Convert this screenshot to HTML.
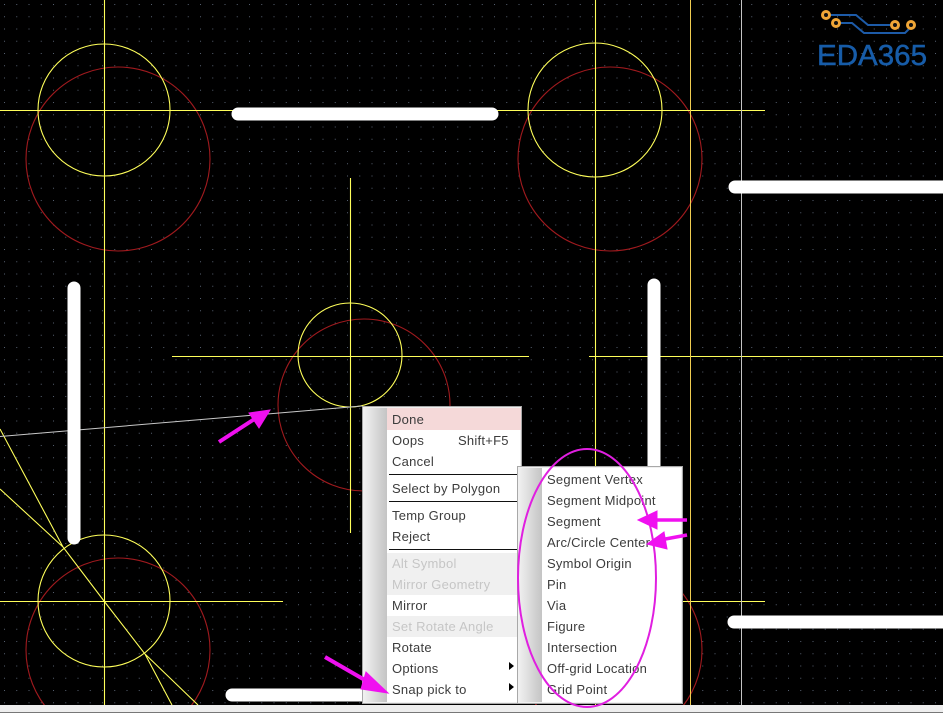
<!DOCTYPE html>
<html><head><meta charset="utf-8"><style>
html,body{margin:0;padding:0;background:#000}
#p{position:relative;width:943px;height:713px;overflow:hidden;background:#000;font-family:"Liberation Sans",sans-serif}
svg{position:absolute;left:0;top:0}
.m{position:absolute;background:#fff;border:1px solid #a8a8a8;box-sizing:border-box;box-shadow:inset 0 0 0 1px #f0f0f0}
.s{position:absolute;left:1px;top:1px;bottom:1px;width:23px;background:linear-gradient(90deg,#f0f0f0,#c4c4c4)}
.i{position:absolute;font-size:13px;letter-spacing:.25px;color:#3c3c3c;height:21px;line-height:21px;white-space:nowrap}
.d{color:#c6c6c6}
.bg{position:absolute;background:#f0f0f0}
.l{position:absolute;height:1px;background:#111}
.a{position:absolute;width:0;height:0;border-left:5px solid #000;border-top:4px solid transparent;border-bottom:4px solid transparent}
</style></head><body><div id="p">
<svg width="943" height="713" viewBox="0 0 943 713">
<defs><pattern id="g" x="4" y="4" width="12.25" height="12.25" patternUnits="userSpaceOnUse"><rect width="1" height="1" fill="#566070"/></pattern></defs>
<rect width="943" height="713" fill="#000"/>
<rect width="943" height="705" fill="url(#g)"/>
<g fill="none" stroke="#a01a1e" stroke-width="1.1">
<circle cx="118" cy="159" r="92"/><circle cx="610" cy="159" r="92"/><circle cx="364" cy="405" r="86"/><circle cx="118" cy="650" r="92"/><circle cx="610" cy="650" r="92"/>
</g>
<g fill="none" stroke="#ffff5a" stroke-width="1.1">
<circle cx="104" cy="110" r="66"/><circle cx="595" cy="110" r="67"/><circle cx="350" cy="355" r="52"/><circle cx="104" cy="601" r="66"/>
<path d="M0 110.5H765M104.5 0V705M595.500 0V705M172 356.500H529M589 356.500H943M350.500 178V533M0 601.500H283M596 601.500H765"/>
<path d="M0 429L63 547L104 601L145 654L172 705M0 489L63 547M145 654L198 705"/>
</g>
<path d="M690.500 0V705" stroke="#f0cc50" fill="none"/>
<path d="M741.500 0V705" stroke="#c4c4c4" fill="none"/>
<path d="M0 436.500L362 406" stroke="#c8c8c8" fill="none"/>
<g fill="none" stroke="#fff" stroke-width="13" stroke-linecap="round">
<path d="M238 114H492M735 187H950M74 288V538M654 285V470M734 622H950M232 695H370"/>
</g>
<rect y="705" width="943" height="8" fill="#eeeeee"/><rect y="712" width="943" height="1" fill="#777"/>
<g fill="none" stroke="#1d5ba8" stroke-width="2"><path d="M830 15H856L868 25H891M840 23H852L864 33H905L911 27"/></g>
<g fill="#111" stroke="#f0a637" stroke-width="3"><circle cx="826" cy="15" r="3.500"/><circle cx="836" cy="23" r="3.500"/><circle cx="895" cy="25" r="3.500"/><circle cx="911" cy="25" r="3.500"/></g>
<text x="817" y="65" font-family="Liberation Sans, sans-serif" font-size="29" fill="#175ca8" stroke="#175ca8" stroke-width=".5" textLength="110" lengthAdjust="spacingAndGlyphs">EDA365</text>
</svg>

<div class="m" style="left:362px;top:406px;width:160px;height:298px"><div class="s"></div></div>
<div class="bg" style="left:387px;top:408px;width:134px;height:22px;background:#f5d9d9"></div>
<div class="bg" style="left:387px;top:553px;width:134px;height:42px"></div>
<div class="bg" style="left:387px;top:616px;width:134px;height:21px"></div>
<div class="l" style="left:389px;top:474px;width:130px"></div>
<div class="l" style="left:389px;top:501px;width:130px"></div>
<div class="l" style="left:389px;top:549px;width:130px"></div>
<div class="i" style="left:392px;top:409px">Done</div>
<div class="i" style="left:392px;top:430px">Oops</div>
<div class="i" style="left:458px;top:430px">Shift+F5</div>
<div class="i" style="left:392px;top:451px">Cancel</div>
<div class="i" style="left:392px;top:478px">Select by Polygon</div>
<div class="i" style="left:392px;top:505px">Temp Group</div>
<div class="i" style="left:392px;top:526px">Reject</div>
<div class="i d" style="left:392px;top:553px">Alt Symbol</div>
<div class="i d" style="left:392px;top:574px">Mirror Geometry</div>
<div class="i" style="left:392px;top:595px">Mirror</div>
<div class="i d" style="left:392px;top:616px">Set Rotate Angle</div>
<div class="i" style="left:392px;top:637px">Rotate</div>
<div class="i" style="left:392px;top:658px">Options</div>
<div class="i" style="left:392px;top:679px">Snap pick to</div>
<div class="a" style="left:509px;top:662px"></div>
<div class="a" style="left:509px;top:683px"></div>

<div class="m" style="left:517px;top:466px;width:166px;height:238px"><div class="s"></div></div>
<div class="i" style="left:547px;top:469px">Segment Vertex</div>
<div class="i" style="left:547px;top:490px">Segment Midpoint</div>
<div class="i" style="left:547px;top:511px">Segment</div>
<div class="i" style="left:547px;top:532px">Arc/Circle Center</div>
<div class="i" style="left:547px;top:553px">Symbol Origin</div>
<div class="i" style="left:547px;top:574px">Pin</div>
<div class="i" style="left:547px;top:595px">Via</div>
<div class="i" style="left:547px;top:616px">Figure</div>
<div class="i" style="left:547px;top:637px">Intersection</div>
<div class="i" style="left:547px;top:658px">Off-grid Location</div>
<div class="i" style="left:547px;top:679px">Grid Point</div>

<svg width="943" height="713" viewBox="0 0 943 713">
<ellipse cx="587" cy="578" rx="69" ry="129" fill="none" stroke="#e01fe0" stroke-width="2"/>
<g fill="#f010f0" stroke="#f010f0">
<path d="M219 442L256 418" stroke-width="4" fill="none"/><path d="M270 410L249 413L259 428Z"/>
<path d="M325 657L370 683" stroke-width="4" fill="none"/><path d="M388 693L366 672L361 689Z"/>
<path d="M687 520H655" stroke-width="3.500" fill="none"/><path d="M638 520L657 511L657 529Z"/>
<path d="M687 535L660 540" stroke-width="3.500" fill="none"/><path d="M647 544L664 532L667 549Z"/>
</g>
</svg>
</div></body></html>
